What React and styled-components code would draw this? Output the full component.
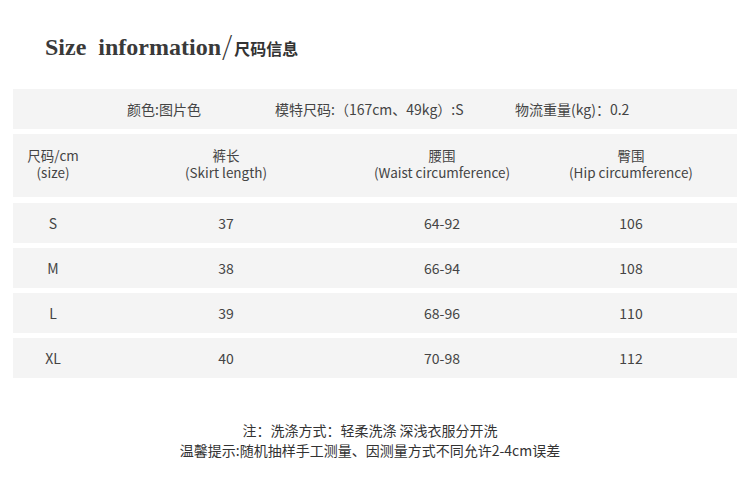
import React from 'react';
import styled, { createGlobalStyle } from 'styled-components';

const GlobalStyle = createGlobalStyle`
  html, body {
    margin: 0;
    padding: 0;
    background: #ffffff;
  }
  body {
    font-family: "Noto Sans CJK SC", "Noto Sans", sans-serif;
    color: #333;
  }
`;

const Page = styled.div`
  width: 750px;
  height: 484px;
  box-sizing: border-box;
  padding: 25px 13px 0 13px;
  overflow: hidden;
`;

const Title = styled.h1`
  margin: 0 0 0 32px;
  height: 39px;
  display: flex;
  align-items: baseline;
  font-weight: normal;
  color: #333;
`;

const TitleEn = styled.span`
  font-family: "Liberation Serif", "Times New Roman", serif;
  font-weight: bold;
  font-size: 24px;
  letter-spacing: 0;
  word-spacing: 6px;
  color: #3a3a3a;
`;

const Slash = styled.span`
  font-family: "Noto Sans CJK SC", sans-serif;
  font-weight: 300;
  font-size: 26px;
  margin: 0 2px 0 1px;
  color: #333;
`;

const TitleCn = styled.span`
  font-family: "Noto Sans CJK SC", sans-serif;
  font-weight: bold;
  font-size: 16px;
  color: #333;
`;

const Table = styled.div`
  margin-top: 25px;
  display: flex;
  flex-direction: column;
  gap: 5px;
`;

const InfoRow = styled.div`
  height: 40px;
  background: #f4f4f4;
  display: grid;
  grid-template-columns: 148px 240px auto;
  align-items: center;
  padding-left: 114px;
  font-size: 14px;
  color: #444;
`;

const Row = styled.div`
  height: ${p => (p.$tall ? '63px' : '40px')};
  margin-top: ${p => (p.$gapTop ? '1px' : '0')};
  background: #f4f4f4;
  display: grid;
  grid-template-columns: 80px 266px 166px 212px;
  align-items: center;
  font-size: ${p => (p.$tall ? '13.5px' : '14px')};
  color: #444;
`;

const Cell = styled.div`
  text-align: center;
  line-height: ${p => (p.$stack ? '17px' : '18px')};
  padding-bottom: ${p => (p.$stack ? '3px' : '0')};
  white-space: nowrap;
`;

const Footer = styled.div`
  margin-top: 42px;
  padding-right: 10px;
  text-align: center;
  font-size: 14px;
  line-height: 20px;
  color: #333;
`;

const sizes = [
  ['S', '37', '64-92', '106'],
  ['M', '38', '66-94', '108'],
  ['L', '39', '68-96', '110'],
  ['XL', '40', '70-98', '112'],
];

const heads = [
  ['尺码/cm', '(size)'],
  ['裤长', '(Skirt length)'],
  ['腰围', '(Waist circumference)'],
  ['臀围', '(Hip circumference)'],
];

export default function App() {
  return (
    <>
      <GlobalStyle />
      <Page>
        <Title>
          <TitleEn>Size information</TitleEn>
          <Slash>/</Slash>
          <TitleCn>尺码信息</TitleCn>
        </Title>
        <Table>
          <InfoRow>
            <span>颜色:图片色</span>
            <span>模特尺码:（167cm、49kg）:S</span>
            <span>物流重量(kg)：0.2</span>
          </InfoRow>
          <Row $tall>
            {heads.map(([cn, en]) => (
              <Cell key={cn} $stack>
                {cn}
                <br />
                {en}
              </Cell>
            ))}
          </Row>
          {sizes.map((r, i) => (
            <Row key={r[0]} $gapTop={i === 0}>
              {r.map((v, j) => (
                <Cell key={j}>{v}</Cell>
              ))}
            </Row>
          ))}
        </Table>
        <Footer>
          注：洗涤方式：轻柔洗涤 深浅衣服分开洗<br />
          温馨提示:随机抽样手工测量、因测量方式不同允许2-4cm误差
        </Footer>
      </Page>
    </>
  );
}
